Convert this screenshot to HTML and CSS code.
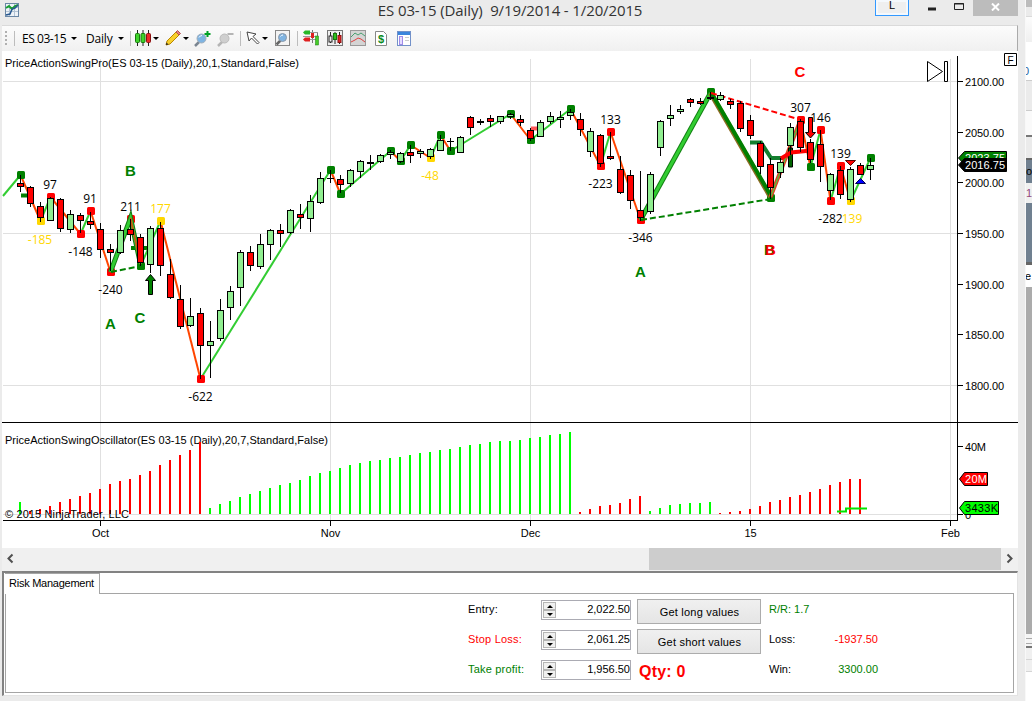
FILE: index.html
```html
<!DOCTYPE html>
<html lang="en">
<head>
  <meta charset="UTF-8">
  <title>ES 03-15 (Daily)</title>
  <link rel="stylesheet" href="styles.css">
</head>
<body>
  <div class="window">
    <header class="titlebar">
      <svg class="app-icon" width="14" height="14">
        <rect x=".5" y=".5" width="13" height="13" fill="#eef3f8" stroke="#6b88a5"/>
        <path d="M1 4.5h12M1 8.5h12M4.5 1v12M9.5 1v12" stroke="#b4c4d4"/>
        <path d="M1 5l3-2 3 3 3-3 3-1" fill="none" stroke="#18a030" stroke-width="2"/>
        <path d="M1 12l4-1 2-5 3-1 3-3" fill="none" stroke="#285890" stroke-width="1.5"/>
      </svg>
      <h1>ES 03-15 (Daily)&nbsp; 9/19/2014 - 1/20/2015</h1>
      <div class="link-button">L</div>
      <div class="win-buttons">
        <svg width="48" height="15"><path d="M7 9h8" stroke="#222" stroke-width="3"/><path d="M33.5 3.5h9v6h-9zM33 4h10" fill="none" stroke="#222"/></svg>
        <div class="close"><svg width="9" height="8"><path d="M1 .5l7 7M8 .5l-7 7" stroke="#fff" stroke-width="2"/></svg></div>
      </div>
    </header>

    <nav class="toolbar">
      <span class="grip"></span>
      <i class="sep"></i>
      <span class="menu instrument">ES 03-15</span><b class="caret"></b>
      <span class="menu period">Daily</span><b class="caret"></b>
      <i class="sep sep-style"></i>
      <svg class="ic-candles" width="16" height="18">
        <path d="M2.5 1v16M8 1v16M13.5 1v16" stroke="#222"/>
        <rect x=".5" y="4.5" width="4" height="9" rx="1" fill="#3fd32b" stroke="#16790b"/>
        <rect x="6" y="4.5" width="4" height="9" rx="1" fill="#3fd32b" stroke="#16790b"/>
        <rect x="11.5" y="4.5" width="4" height="9" rx="1" fill="#ed2929" stroke="#8b1010"/>
      </svg><b class="caret near"></b>
      <svg class="ic-pencil" width="16" height="16">
        <path d="M1 15l1-4 9-9 3 3-9 9z" fill="#f8d02c" stroke="#b98700"/>
        <path d="M11 2l1.500-1.500 3 3L14 5z" fill="#e88080" stroke="#b25050"/>
        <path d="M1 15l.5-2.500 2 2z" fill="#222"/>
      </svg><b class="caret near"></b>
      <svg class="ic-zoomin" width="17" height="17">
        <path d="M1 16l5-5" stroke="#7a8591" stroke-width="2.500"/>
        <circle cx="7.500" cy="8.500" r="4.500" fill="#7fb4e2" stroke="#a3afbb"/>
        <path d="M5 7.500q1-2 3-2" fill="none" stroke="#fff"/>
        <path d="M13.500 1v6M10.500 4h6" stroke="#00a025" stroke-width="2"/>
      </svg>
      <svg class="ic-zoomout" width="17" height="17">
        <path d="M1 16l5-5" stroke="#b5b5b5" stroke-width="2.500"/>
        <circle cx="7.500" cy="8.500" r="4.500" fill="#cfcfcf" stroke="#bbb"/>
        <path d="M10.500 4h6" stroke="#b5b5b5" stroke-width="2"/>
      </svg>
      <i class="sep sep-cursor"></i>
      <svg class="ic-pointer" width="14" height="14">
        <path d="M1 1l9 2-3 2.500 6 6-1.500 1.500-6-6L3 10z" fill="#fff" stroke="#444"/>
      </svg><b class="caret"></b>
      <svg class="ic-lens" width="15" height="16">
        <rect x=".5" y=".5" width="14" height="15" fill="#f3f3f3" stroke="#888"/>
        <path d="M1.500 14.500l4-4" stroke="#666" stroke-width="2.500"/>
        <circle cx="7.500" cy="7.500" r="4" fill="#7fb4e2" stroke="#8a98a8"/>
        <path d="M5.500 6.500q1-1.500 2.500-1.500" fill="none" stroke="#fff"/>
      </svg>
      <i class="sep sep-panels"></i>
      <svg class="ic-dom" width="16" height="16">
        <path d="M9.500 0v13M14.500 2v13" stroke="#777"/>
        <path d="M0 6.500h12M7 2.500h8M7 9.500h8" stroke="#999"/>
        <path d="M2 .5h5v4H2L0 2.500z" fill="#27b827"/>
        <path d="M2 7.500h5v4H2L0 9.500z" fill="#df2020"/>
        <rect x="8" y="3" width="3" height="5" fill="#df2020"/>
        <rect x="12.500" y="6" width="3" height="9" fill="#45cc28" stroke="#16790b" stroke-width=".5"/>
      </svg>
      <svg class="ic-chart" width="16" height="16">
        <rect x=".5" y=".5" width="15" height="15" fill="#eee" stroke="#777"/>
        <path d="M3.500 2v11M8 2v12M12.500 2v12" stroke="#222"/>
        <rect x="2" y="6" width="3" height="6" fill="#eee" stroke="#222"/>
        <rect x="6.500" y="3.500" width="3" height="6" fill="#30c020" stroke="#16790b"/>
        <rect x="11" y="5.500" width="3" height="7" fill="#e52525" stroke="#8b1010"/>
      </svg>
      <svg class="ic-indicators" width="16" height="16">
        <rect x=".5" y=".5" width="15" height="15" fill="#d4d4d4" stroke="#999"/>
        <path d="M1 7l4-4 3 2 3-2 4 3" fill="none" stroke="#48a070"/>
        <path d="M1 12l4-2 3-2 3 1 4 3" fill="none" stroke="#df4040"/>
      </svg>
      <svg class="ic-strategy" width="12" height="15">
        <path d="M.5.5h8l3 3v11H.5z" fill="#fff" stroke="#888"/>
        <text x="6" y="12" class="dollar">$</text>
      </svg>
      <svg class="ic-props" width="14" height="15">
        <rect x=".5" y=".5" width="13" height="14" fill="#fff" stroke="#7291c9"/>
        <rect x="1" y="1" width="12" height="3" fill="#3b85dc"/>
        <rect x="2.500" y="5.500" width="3" height="8" fill="#e4dcff" stroke="#a08be8"/>
        <path d="M8 6.500h4M8 9.500h4" stroke="#ccc"/>
      </svg>
    </nav>

    <svg class="chart" width="1016" height="497" viewBox="2 51 1016 497">
      <g class="grid">
        <path d="M3 81.500h954M3 233.500h954M3 385.500h954M3 514.500h954"/>
        <path d="M100.500 59v461M330.500 59v461M530.500 59v461M750.500 59v461M950.500 59v461"/>
      </g>

      <text x="5" y="67" textLength="294" class="caption">PriceActionSwingPro(ES 03-15 (Daily),20,1,Standard,False)</text>
      <text x="5" y="444" textLength="323" class="caption">PriceActionSwingOscillator(ES 03-15 (Daily),20,7,Standard,False)</text>
      <g id="bars"></g>
      <path d="M837 511.500h9v-3h21" class="volume-line"/>
      <text x="5" y="518" textLength="124" class="caption">© 2015 NinjaTrader, LLC</text>

      <!-- previous levels -->
      <path d="M21 195.500h7M131 248h16" stroke="#008000" stroke-width="4"/>
      <path d="M531 128.500h7" stroke="#ff5a5a" stroke-width="4"/>
      <g id="swings"></g>

      <!-- ABC patterns -->
      <g class="abc">
        <path d="M110.500 272l20-54 10 46" stroke="#137a13" stroke-width="5"/>
        <path d="M110.500 272l20-54 10 46" stroke="#32cd32" stroke-width="3"/>
        <path d="M130.500 218l10 46" stroke="#c25b12" stroke-width="2"/>
        <path d="M640.500 220L710.500 93" stroke="#118011" stroke-width="5"/>
        <path d="M640.500 220L710.500 93" stroke="#32cd32" stroke-width="3"/>
        <path d="M710.500 93L770.500 197" stroke="#8a6a20" stroke-width="5"/>
        <path d="M711.500 93L771.500 197" stroke="#008000" stroke-width="4"/>
        <path d="M770.500 197l30-77" stroke="#e33b20" stroke-width="4"/>
        <path d="M770.500 197l30-77" stroke="#5cb83c" stroke-width="1.500"/>
        <path d="M750 142.500h11l10 15.500h12" stroke="#137f2f" stroke-width="4"/>
        <path d="M788.500 148h4v19h-4z" class="entry"/>
        <path d="M781 158.500l10-6 20-2" stroke="#ff0000" stroke-width="4"/>
        <path d="M111 272l30-6M641 220l130-21" stroke="#008000" stroke-width="2" stroke-dasharray="6 3"/>
        <path d="M711 93l90 27" stroke="#ff0000" stroke-width="2" stroke-dasharray="6 3"/>
      </g>
      <g id="candles"></g>

      <path d="M150.500 274.500l5 6h-3v14h-4v-14h-3z" fill="#008000" stroke="#000"/>
      <path d="M808.500 117.500h4v15h3l-5 5.500-5-5.500h3z" fill="#ff0000" stroke="#000"/>
      <path d="M845.500 160.500h10l-5 5z" fill="#ff0000" stroke="#500"/>
      <path d="M855.500 183.500h10l-5-5z" fill="#0000ff" stroke="#005"/>

      <g class="swing-label">
        <text x="50" y="189">97</text>
        <text x="90" y="203">91</text>
        <text x="130.500" y="211">211</text>
        <text x="160.500" y="213" class="gold">177</text>
        <text x="40" y="244" class="gold">-185</text>
        <text x="80.500" y="256">-148</text>
        <text x="110.500" y="294">-240</text>
        <text x="200.500" y="401">-622</text>
        <text x="430" y="180" class="gold">-48</text>
        <text x="610.500" y="124">133</text>
        <text x="600.500" y="188">-223</text>
        <text x="640.500" y="242">-346</text>
        <text x="800.500" y="112">307</text>
        <text x="820.500" y="122">146</text>
        <text x="840.500" y="158">139</text>
        <text x="852" y="223" class="gold">139</text>
        <text x="830.500" y="223">-282</text>
      </g>
      <g class="wave">
        <text x="110.500" y="329">A</text>
        <text x="130.500" y="176">B</text>
        <text x="140" y="323">C</text>
        <text x="640.500" y="277">A</text>
        <text x="769.500" y="255">B</text>
        <text x="770.500" y="255" class="red">B</text>
        <text x="800" y="77" class="red">C</text>
      </g>

      <!-- axes -->
      <path d="M957.500 56v465M3 520.500h955M2 422.500h1016" class="axis"/>
      <path d="M957 81.500h6M957 132.500h6M957 182.500h6M957 233.500h6M957 284.500h6M957 334.500h6M957 385.500h6M957 446.500h6M957 514.500h6" class="axis"/>
      <path d="M100.500 520v6M330.500 520v6M530.500 520v6M750.500 520v6M950.500 520v6" class="axis"/>
      <g class="scale">
        <text x="965" y="86" textLength="39">2100.00</text>
        <text x="965" y="137" textLength="39">2050.00</text>
        <text x="965" y="187" textLength="39">2000.00</text>
        <text x="965" y="238" textLength="39">1950.00</text>
        <text x="965" y="289" textLength="39">1900.00</text>
        <text x="965" y="339" textLength="39">1850.00</text>
        <text x="965" y="390" textLength="39">1800.00</text>
        <text x="965" y="451" textLength="21">40M</text>
        <text x="965" y="519">0</text>
      </g>
      <g class="scale middle">
        <text x="100.500" y="537">Oct</text>
        <text x="330.500" y="537">Nov</text>
        <text x="530.500" y="537">Dec</text>
        <text x="750.500" y="537">15</text>
        <text x="950.500" y="537">Feb</text>
      </g>
      <g class="scale tags">
        <path d="M958.500 158l6-6.500h42v13h-42z" fill="#008000"/>
        <text x="965" y="162" textLength="40" fill="#fff">2023.75</text>
        <path d="M958.500 165l6-6.500h42v13h-42z" fill="#000"/>
        <text x="965" y="169" textLength="40" fill="#fff">2016.75</text>
        <path d="M959.500 479l5-6.500h23v13h-23z" fill="#ff0000"/>
        <text x="965" y="483" textLength="22" fill="#fff">20M</text>
        <path d="M959.500 508l5-6.500h34v13h-34z" fill="#00ff00"/>
        <text x="965" y="512" textLength="33">3433K</text>
      </g>

      <path d="M927.500 61.500v20l15-10z" fill="#fff" stroke="#000"/>
      <path d="M944.500 61.500h3v20h-3z" fill="#fff" stroke="#000"/>
      <path d="M1004.500 53.500h12v12h-12z" fill="#fff" stroke="#000"/>
      <text x="1010.500" y="63.500" class="fixed">F</text>
    </svg>

    <div class="scrollbar">
      <svg width="16" height="23"><path d="M10.500 6.500l-4 4 4 4" fill="none" stroke="#505050" stroke-width="2"/></svg>
      <div class="thumb"></div>
      <svg width="17" height="23"><path d="M6.500 6.500l4 4-4 4" fill="none" stroke="#505050" stroke-width="2"/></svg>
    </div>

    <section class="panel">
      <div class="tabs"><div class="tab">Risk Management</div><div class="tab-rest"></div></div>
      <div class="page">
        <form class="risk">
          <label>Entry:</label>
          <div class="spin"><span class="arrows"><i class="up"></i><i class="down"></i></span>2,022.50</div>
          <button type="button" class="long">Get long values</button>
          <span class="profit">R/R: 1.7</span>
          <span></span>

          <label class="loss">Stop Loss:</label>
          <div class="spin"><span class="arrows"><i class="up"></i><i class="down"></i></span>2,061.25</div>
          <button type="button">Get short values</button>
          <span>Loss:</span>
          <span class="amount loss">-1937.50</span>

          <label class="profit">Take profit:</label>
          <div class="spin"><span class="arrows"><i class="up"></i><i class="down"></i></span>1,956.50</div>
          <strong class="qty">Qty: 0</strong>
          <span>Win:</span>
          <span class="amount profit">3300.00</span>
        </form>
      </div>
    </section>
  </div>

  <!-- sliver of the window behind -->
  <aside class="behind">
    <div class="b-close"></div>
    <div class="b-title"></div>
    <div class="b-tool"></div>
    <div class="b-white"><span>0</span></div>
    <div class="b-band"></div>
    <div class="b-field"></div>
    <div class="b-light"></div>
    <div class="b-head"><span>o</span></div>
    <div class="b-row"><span>1</span></div>
    <div class="b-slate"></div>
    <div class="b-label"><span>e</span></div>
    <div class="b-gray"></div>
    <div class="b-foot"></div>
    <div class="b-rest"></div>
    <div class="b-blank"></div>
  </aside>
  <script src="chart.js"></script>
</body>
</html>
```
FILE: styles.css
```css
* {
  box-sizing: border-box;
}
body {
  margin: 0;
  width: 1032px;
  height: 701px;
  overflow: hidden;
  display: flex;
  background: #ebebeb;
  font-family: "Liberation Sans", Arial, sans-serif;
  font-size: 11px;
  color: #000;
}
.window {
  width: 1026px;
  padding: 0 7px 0 2px;
  border-right: 1px solid #f8f8f8;
  background: #ebebeb;
}

/* title bar */
.titlebar {
  height: 25px;
  display: flex;
  align-items: flex-start;
}
.app-icon {
  margin: 3px 0 0 3px;
}
.titlebar h1 {
  width: 266px;
  margin: 0 0 0 359px;
  font: 15px/21px "Open Sans", sans-serif;
  letter-spacing: -0.12px;
  white-space: nowrap;
  color: #333;
}
.link-button {
  width: 34px;
  height: 16px;
  margin-left: 233px;
  border: 1px solid #3399ff;
  border-top: 0;
  background: #efefef;
  box-shadow: inset 0 0 0 2px #f5f9fd;
  text-align: center;
  line-height: 11px;
}
.win-buttons {
  display: flex;
  margin-left: 12px;
}
.close {
  width: 45px;
  height: 16px;
  margin-left: 4px;
  padding-top: 3px;
  background: #bcbcbc;
  text-align: center;
  line-height: 0;
}

/* toolbar */
.toolbar {
  width: 1016px;
  height: 26px;
  display: flex;
  align-items: center;
  border-top: 1px solid #dadada;
  border-right: 1px solid #aaa;
  background: linear-gradient(#fcfcfc, #f0f0f0);
  padding-bottom: 1px;
  font: 12px "Open Sans", sans-serif;
}
.toolbar > * {
  flex: none;
}
.grip {
  width: 2px;
  height: 14px;
  margin-left: 3px;
  background: repeating-linear-gradient(#b0b0b0 0 2px, transparent 2px 4px);
}
.sep {
  width: 1px;
  height: 15px;
  margin-left: 7px;
  background: #bdbdbd;
}
.menu {
  white-space: nowrap;
}
.instrument {
  width: 44px;
  margin-left: 7px;
  letter-spacing: -0.45px;
}
.period {
  width: 27px;
  margin-left: 9px;
  letter-spacing: -0.2px;
}
.caret {
  border: 3px solid transparent;
  border-top-color: #000;
  border-bottom: 0;
  margin-left: 5px;
}
.caret.near {
  margin-left: 2px;
}
.sep-style {
  margin-left: 6px;
}
.ic-candles {
  margin-left: 4px;
}
.ic-pencil {
  margin-left: 6px;
}
.ic-zoomin {
  margin-left: 5px;
}
.ic-zoomout {
  margin-left: 6px;
}
.sep-cursor {
  margin-left: 6px;
}
.ic-pointer {
  margin-left: 5px;
}
.ic-pointer + .caret {
  margin-left: 2px;
}
.ic-lens {
  margin-left: 7px;
}
.sep-panels {
  margin-left: 7px;
}
.ic-dom {
  margin-left: 5px;
}
.ic-chart {
  margin-left: 8px;
}
.ic-indicators {
  margin-left: 7px;
}
.ic-strategy {
  margin-left: 9px;
}
.ic-props {
  margin-left: 10px;
}
.dollar {
  font: bold 11px "Liberation Sans", sans-serif;
  text-anchor: middle;
  fill: #0a8a20;
}

/* chart */
.chart {
  display: block;
  background: #fff;
}
.grid path {
  stroke: #e0e0e0;
  fill: none;
}
.caption {
  font-size: 11px;
}
.axis {
  stroke: #000;
  fill: none;
}
.scale {
  font-size: 11px;
}
.middle {
  text-anchor: middle;
}
.tags path {
  stroke: #000;
}
.swing-label {
  font: 12px "Open Sans", sans-serif;
  text-anchor: middle;
}
.gold {
  fill: #ffd700;
}
.wave {
  font-size: 15px;
  font-weight: bold;
  text-anchor: middle;
  fill: #008000;
}
.wave .red {
  fill: #ff0000;
}
.abc path {
  fill: none;
}
.abc .entry {
  fill: #006400;
  stroke: #000;
}
.volume-line {
  fill: none;
  stroke: #00e600;
  stroke-width: 2;
}
.fixed {
  font-size: 10px;
  text-anchor: middle;
}

/* scrollbar */
.scrollbar {
  width: 1016px;
  height: 23px;
  display: flex;
  justify-content: space-between;
  background: #f0f0f0;
}
.thumb {
  width: 352px;
  height: 22px;
  margin-left: auto;
  background: #cdcdcd;
}

/* risk management */
.panel {
  width: 1016px;
  height: 125px;
  padding: 0 3px 2px 1px;
  background: #fff;
  border: 1px solid #e3e3e3;
  border-top: 2px solid #828282;
  border-left: 2px solid #828282;
}
.tabs {
  display: flex;
  height: 21px;
}
.tab {
  width: 95px;
  padding-left: 4px;
  border: 1px solid #a5a5a5;
  border-width: 1px 1px 0 0;
  line-height: 19px;
  letter-spacing: -0.25px;
  white-space: nowrap;
}
.tab-rest {
  flex: 1;
  border-bottom: 1px solid #a5a5a5;
}
.page {
  height: 99px;
  border: 1px solid #a5a5a5;
  border-top: 0;
}
.risk {
  display: grid;
  grid-template-columns: 73px 90px 124px 65px 44px;
  grid-auto-rows: 30px;
  padding: 5px 0 0 462px;
}
.risk > * {
  line-height: 21px;
  white-space: nowrap;
}
.risk label {
  letter-spacing: 0.2px;
}
.risk .spin {
  height: 20px;
  display: flex;
  justify-content: space-between;
  margin-top: 1px;
  border: 1px solid #ababb3;
  line-height: 17px;
}
.arrows {
  width: 15px;
  display: flex;
  flex-direction: column;
  padding: 1px;
}
.arrows i {
  flex: 1;
  display: flex;
  align-items: center;
  justify-content: center;
  border: 1px solid #b5b5b5;
  background: #efefef;
}
.arrows i::before {
  content: "";
  border: 3px solid transparent;
}
.arrows .up::before {
  border-top: 0;
  border-bottom-color: #000;
}
.arrows .down::before {
  border-bottom: 0;
  border-top-color: #000;
}
.risk button {
  width: 124px;
  height: 25px;
  margin-left: 6px;
  padding: 0 0 0 1px;
  border: 1px solid #acacac;
  background: linear-gradient(#f0f0f0, #e5e5e5);
  font: 11px "Liberation Sans", Arial, sans-serif;
  letter-spacing: 0.2px;
}
.risk > span {
  margin-left: 14px;
}
.risk .amount {
  margin-right: -14px;
  margin-left: 0;
  justify-self: end;
}
.risk .qty {
  margin-left: 8px;
  font-size: 16px;
  line-height: 26px;
  letter-spacing: 0.2px;
  color: #ff0000;
}
.loss {
  color: #ff0000;
}
.profit {
  color: #008000;
}

/* window behind */
.behind {
  width: 6px;
  overflow: hidden;
  display: flex;
  flex-direction: column;
}
.behind div {
  flex: none;
  overflow: hidden;
}
.behind span {
  display: block;
}
.b-close {
  height: 7px;
  background: #bcbcbc;
}
.b-title {
  height: 10px;
  border-bottom: 1px solid #dadada;
}
.b-tool {
  height: 25px;
  background: linear-gradient(#fcfcfc, #f0f0f0);
}
.b-white {
  height: 39px;
  padding-top: 23px;
  background: #fff;
  border-bottom: 1px solid #ccc;
  color: #1c5fa5;
}
.b-white span {
  margin-left: -3px;
}
.b-band {
  height: 29px;
}
.b-field {
  height: 25px;
  background: #fafafa;
  border-top: 1px solid #ccc;
}
.b-light {
  height: 25px;
  border-top: 2px solid #777;
  border-bottom: 2px solid #666;
}
.b-head {
  height: 23px;
  padding-top: 5px;
  background: #708090;
}
.b-row {
  height: 20px;
  padding-top: 4px;
  background: #f0f0f0;
  color: #93497c;
}
.b-slate {
  height: 59px;
  background: #708090;
}
.b-label {
  height: 25px;
  padding-top: 5px;
  background: #fff;
  border-top: 3px solid #666;
}
.b-label span {
  margin-left: -1px;
}
.b-gray {
  height: 347px;
  background: #ababab;
}
.b-foot {
  height: 14px;
  background: repeating-linear-gradient(#f5f5f5 0 4px, #aaa 4px 5px);
  border-bottom: 2px solid #777;
}
.b-rest {
  height: 24px;
  background: repeating-linear-gradient(#f0f0f0 0 11px, #d5d5d5 11px 12px);
}
.b-blank {
  height: 29px;
  background: #fff;
}
```
FILE: chart.js
```js
const NS = 'http://www.w3.org/2000/svg';

function add(parent, tag, attrs) {
  const el = document.createElementNS(NS, tag);
  for (const key in attrs) el.setAttribute(key, attrs[key]);
  document.getElementById(parent).appendChild(el);
}

// one row per day: high, body top, body bottom, low, colour (r down, g up)
const candles = [
  [175, 183.5, 186.5, 192, 'r'], [186, 187.5, 203.5, 207, 'r'], [202, 206.5, 217.5, 222, 'r'],
  [197, 198.5, 220.5, 221, 'g'], [198, 199.5, 228.5, 232, 'r'], [210, 214.5, 229.5, 233, 'g'],
  [213, 215.5, 220.5, 233, 'r'], [212, 221.5, 224.5, 229, 'r'], [223, 229.5, 249.5, 258, 'r'],
  [244, 249.5, 252.5, 271, 'r'], [225, 230.5, 252.5, 254, 'g'], [219, 229.5, 234.5, 241, 'r'],
  [234, 237.5, 262.5, 266, 'r'], [226, 228.5, 264.5, 273, 'g'], [222, 228.5, 265.5, 276, 'r'],
  [259, 274.5, 297.5, 299, 'r'], [285, 299.5, 326.5, 329, 'r'], [298, 316.5, 325.5, 327, 'g'],
  [308, 313.5, 345.5, 379, 'r'], [321, 341.5, 345.5, 378, 'g'], [299, 310.5, 338.5, 341, 'g'],
  [286, 291.5, 307.5, 320, 'g'], [250, 252.5, 287.5, 306, 'g'], [246, 252.5, 265.5, 271, 'r'],
  [234, 244.5, 266.5, 269, 'g'], [229, 230.5, 244.5, 260, 'g'], [224, 230.5, 233.5, 247, 'r'],
  [209, 210.5, 232.5, 234, 'g'], [204, 214.5, 217.5, 229, 'r'], [195, 201.5, 218.5, 232, 'g'],
  [172, 178.5, 202.5, 204, 'g'], [170, 178.5, 178.5, 183, 'r'], [175, 179.5, 184.5, 193, 'r'],
  [169, 170.5, 183.5, 187, 'g'], [160, 161.5, 171.5, 178, 'g'], [155, 163, 163, 170, 'r'],
  [154, 155.5, 161.5, 163, 'g'], [150, 152.5, 154.5, 159, 'g'], [152, 153.5, 161.5, 163, 'g'],
  [145, 152.5, 155.5, 163, 'r'], [149, 151.5, 153.5, 158, 'g'], [148, 149.5, 156.5, 159, 'g'],
  [135, 140.5, 150.5, 151, 'g'], [138, 141.5, 141.5, 151, 'r'], [136, 137.5, 152.5, 153, 'g'],
  [116, 117.5, 127.5, 135, 'r'], [119, 122, 122, 125, 'r'], [115, 118.5, 121.5, 127, 'r'],
  [116, 116.5, 121.5, 124, 'g'], [113, 114.5, 116.5, 119, 'g'], [115, 119.5, 122.5, 126, 'r'],
  [128, 130.5, 138.5, 141, 'r'], [120, 122.5, 136.5, 137, 'g'], [112, 116.5, 121.5, 124, 'g'],
  [111, 117.5, 119.5, 128, 'g'], [109, 112.5, 115.5, 120, 'g'], [113, 119.5, 129.5, 136, 'r'],
  [128, 131.5, 151.5, 157, 'g'], [134, 135.5, 163.5, 167, 'r'], [132, 156.5, 158.5, 160, 'r'],
  [156, 169.5, 192.5, 194, 'r'], [170, 175.5, 200.5, 209, 'r'], [171, 210.5, 217.5, 221, 'r'],
  [172, 174.5, 211.5, 214, 'g'], [120, 121.5, 147.5, 156, 'g'], [105, 115.5, 118.5, 126, 'g'],
  [105, 109.5, 111.5, 114, 'g'], [98, 99.5, 102.5, 107, 'r'], [98, 101.5, 103.5, 105, 'r'],
  [92, 98, 98, 100, 'r'], [92, 95.5, 99.5, 101, 'g'], [99, 101.5, 104.5, 109, 'r'],
  [101, 103.5, 128.5, 132, 'r'], [115, 120.5, 135.5, 139, 'r'], [141, 143.5, 166.5, 174, 'r'],
  [158, 164.5, 187.5, 199, 'r'], [158, 162.5, 172.5, 178, 'g'], [123, 127.5, 145.5, 155, 'g'],
  [119, 121.5, 147.5, 152, 'r'], [139, 142.5, 159.5, 163, 'r'], [130, 144.5, 166.5, 182, 'r'],
  [173, 174.5, 190.5, 200, 'g'], [166, 170.5, 194.5, 199, 'r'], [167, 169.5, 199.5, 202, 'g'],
  [163, 165.5, 174.5, 175, 'r'], [158, 165.5, 169.5, 180, 'g']
];

candles.forEach(([high, top, bottom, low, dir], i) => {
  const x = 20.5 + i * 10;
  add('candles', 'path', { d: `M${x} ${high}V${low}`, stroke: '#000' });
  if (bottom === top) {
    // open equals close, thicker when the level falls between two pixels
    add('candles', 'path', { d: `M${x - 3.5} ${top}h7`, stroke: '#000', 'stroke-width': top % 1 ? 1 : 2 });
  } else {
    add('candles', 'rect', {
      x: x - 3, y: top, width: 6, height: bottom - top,
      fill: dir === 'g' ? '#90ee90' : '#ff0000', stroke: '#000'
    });
  }
});

const colors = { g: '#008000', r: '#ff0000', y: '#ffd700' };

// day index, price level and colour of each swing point
const swings = [
  [0, 175, 'g'], [2, 221, 'y'], [3, 197, 'r'], [6, 234, 'r'], [7, 211, 'r'], [9, 272, 'r'],
  [11, 219, 'r'], [12, 266, 'g'], [14, 221, 'y'], [18, 379, 'r'], [31, 170, 'g'], [32, 194, 'g'],
  [37, 151, 'g'], [38, 161, 'g'], [39, 145, 'g'], [41, 158, 'y'], [42, 135, 'g'], [43, 151, 'g'],
  [49, 114, 'g'], [51, 140, 'g'], [55, 109, 'g'], [58, 166, 'r'], [59, 132, 'r'], [62, 220, 'r'],
  [69, 92, 'g'], [75, 198, 'g'], [78, 120, 'r'], [79, 167, 'g'], [80, 130, 'r'], [81, 201, 'r'],
  [82, 166, 'r'], [83, 201, 'y'], [85, 158, 'g']
];

let prev = [3, 196];
swings.forEach(([i, y]) => {
  const x = 20.5 + i * 10;
  add('swings', 'path', {
    d: `M${prev[0]} ${prev[1]}L${x} ${y}`,
    stroke: y < prev[1] ? '#32cd32' : '#ff4500', 'stroke-width': 2
  });
  prev = [x, y];
});
swings.forEach(([i, y, c]) => {
  add('swings', 'rect', { x: 17 + i * 10, y: y - 4, width: 8, height: 8, rx: 1.5, fill: colors[c] });
});

// tops of the oscillator bars, grouped by swing
const runs = [
  ['#00ff00', [502]],
  ['#ff0000', [511, 509, 506, 502, 499, 496, 493, 489, 484, 481, 479, 475, 471, 465, 460, 455, 450, 442]],
  ['#00ff00', [508, 504, 501, 497, 494, 491, 488, 485, 483, 480, 476, 473, 471, 468, 465, 463, 461, 460,
    458, 457, 455, 453, 452, 450, 449, 447, 445, 444, 442, 441, 441, 440, 438, 437, 435, 434, 432]],
  ['#ff0000', [512, 509, 506, 505, 503, 499, 496]],
  ['#00ff00', [511, 508, 505, 504, 503, 503, 502]],
  ['#ff0000', [513, 512, 511, 509, 506, 502, 500, 497, 495, 492, 489, 485, 482, 479, 479]]
];

let day = 0;
runs.forEach(([color, tops]) => {
  tops.forEach(top => {
    add('bars', 'rect', { x: 19 + day * 10, y: top, width: 2, height: 514 - top, fill: color });
    day++;
  });
});
```
